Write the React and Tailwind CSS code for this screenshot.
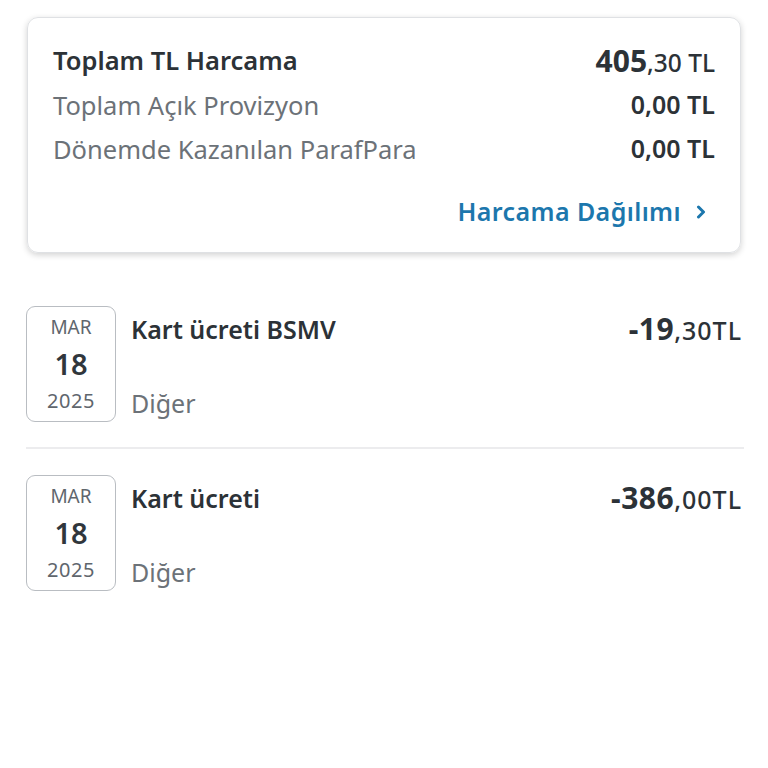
import React from 'react';

const txns = [
  { title: 'Kart ücreti BSMV', whole: '-19', dec: ',30TL' },
  { title: 'Kart ücreti', whole: '-386', dec: ',00TL' },
];

const DateBox = () => (
  <div className="w-[90px] h-[116px] shrink-0 rounded-[9px] border border-[#b9bdc2] flex flex-col items-center justify-between py-[7px] text-[#5f666d]">
    <span className="text-[19px] leading-[26px]">MAR</span>
    <span className="text-[29px] leading-[34px] font-semibold text-[#30363c]">18</span>
    <span className="text-[20px] leading-[26px] tracking-[0.5px]">2025</span>
  </div>
);

const App = () => {
  return (
    <div className="w-[768px] h-[768px] bg-white pt-[17px] px-[26px]" style={{ fontFamily: '"Noto Sans", sans-serif' }}>
      {/* Summary card */}
      <div className="ml-[1px] mr-[1px] h-[236px] rounded-[11px] border border-[#dfe1e4] shadow-[0_2px_6px_rgba(0,0,0,0.18)] px-[25px] pt-[24px]">
        <div className="flex items-center justify-between h-[36px]">
          <span className="text-[25.5px] font-semibold text-[#2c3237]">Toplam TL Harcama</span>
          <span className="text-[#2c3237]">
            <span className="text-[30px] font-bold">405</span>
            <span className="text-[24.5px] font-medium">,30 TL</span>
          </span>
        </div>
        <div className="flex items-center justify-between h-[44px] mt-[5px]">
          <span className="text-[25.5px] text-[#6c7278]">Toplam Açık Provizyon</span>
          <span className="text-[25px] font-semibold text-[#2c3237]">0,00 TL</span>
        </div>
        <div className="flex items-center justify-between h-[44px]">
          <span className="text-[25.5px] text-[#6c7278]">Dönemde Kazanılan ParafPara</span>
          <span className="text-[25px] font-semibold text-[#2c3237]">0,00 TL</span>
        </div>
        <div className="flex justify-end items-center mt-[22px] pr-[9px] gap-[15px] text-[#1c77ad]">
          <span className="text-[25px] font-semibold tracking-[0.4px]">Harcama Dağılımı</span>
          <svg width="10" height="14" viewBox="0 0 10 14" fill="none">
            <path d="M2.5 2 L7.5 7 L2.5 12" stroke="#1c77ad" strokeWidth="3" strokeLinecap="round" strokeLinejoin="round" />
          </svg>
        </div>
      </div>

      {/* Transactions */}
      <div className="mt-[53px]">
        {txns.map((t, i) => (
          <div key={i}>
            {i > 0 && <div className="h-[2px] bg-[#ececee] mt-[25px] mb-[26px] mr-[-2px]" />}
            <div className="flex">
              <DateBox />
              <div className="flex-1 flex flex-col justify-between pl-[15px] pt-[6px] pb-[2px]">
                <span className="text-[25px] font-semibold text-[#2c3237] leading-[34px]">{t.title}</span>
                <span className="text-[25px] text-[#6c7278] leading-[34px]">Diğer</span>
              </div>
              <div className="pt-[6px] text-[#2c3237] leading-[34px]">
                <span className="text-[30px] font-bold tracking-[0.5px]">{t.whole}</span>
                <span className="text-[25px] font-medium tracking-[1px]">{t.dec}</span>
              </div>
            </div>
          </div>
        ))}
      </div>
    </div>
  );
};

export default App;
